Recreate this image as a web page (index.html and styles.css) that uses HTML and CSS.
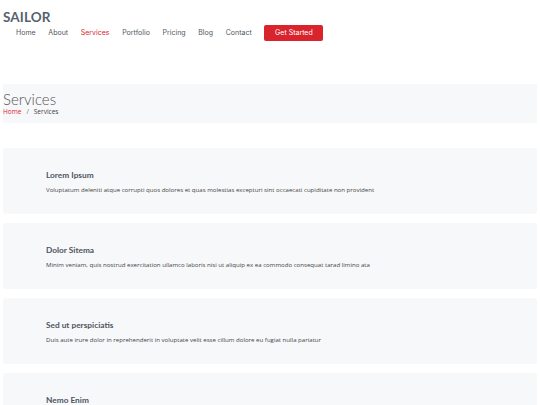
FILE: index.html
```html
<!DOCTYPE html>
<html lang="en">
<head>
<meta charset="utf-8">
<title>Services - Sailor</title>
<link rel="stylesheet" href="styles.css">
</head>
<body>
<header class="header">
  <div class="logo">SAILOR</div>
  <nav class="nav">
    <a href="#">Home</a>
    <a href="#">About</a>
    <a href="#" class="active">Services</a>
    <a href="#">Portfolio</a>
    <a href="#">Pricing</a>
    <a href="#">Blog</a>
    <a href="#">Contact</a>
    <a href="#" class="btn">Get Started</a>
  </nav>
</header>
<section class="breadcrumbs">
  <h2>Services</h2>
  <ol>
    <li><a href="#">Home</a></li>
    <li class="sep">/</li>
    <li>Services</li>
  </ol>
</section>
<main class="services">
  <div class="card">
    <h4>Lorem Ipsum</h4>
    <p>Voluptatum deleniti atque corrupti quos dolores et quas molestias excepturi sint occaecati cupiditate non provident</p>
  </div>
  <div class="card">
    <h4>Dolor Sitema</h4>
    <p>Minim veniam, quis nostrud exercitation ullamco laboris nisi ut aliquip ex ea commodo consequat tarad limino ata</p>
  </div>
  <div class="card">
    <h4>Sed ut perspiciatis</h4>
    <p>Duis aute irure dolor in reprehenderit in voluptate velit esse cillum dolore eu fugiat nulla pariatur</p>
  </div>
  <div class="card">
    <h4>Nemo Enim</h4>
    <p>At vero eos et accusamus et iusto odio dignissimos ducimus qui blanditiis praesentium voluptatum deleniti atque</p>
  </div>
</main>
</body>
</html>
```
FILE: styles.css
```css
* { box-sizing: border-box; }
html, body { margin: 0; padding: 0; }
body {
  background: #fff;
  font-family: "Open Sans", "Liberation Sans", sans-serif;
  color: #444;
  padding: 0 3px;
}
a { text-decoration: none; color: inherit; }

.header {
  padding-top: 9px;
  height: 84px;
}
.logo {
  font-family: "Lato", "Open Sans", sans-serif;
  font-weight: 700;
  font-size: 13.5px;
  line-height: 16px;
  color: #556270;
  letter-spacing: 0.1px;
}
.nav {
  display: flex;
  align-items: center;
  gap: 12.7px;
  margin-top: -1px;
  padding-left: 13px;
  font-family: "Inter", "Roboto", sans-serif;
  font-size: 7px;
  color: #505760;
  height: 17px;
}
.nav a.active { color: #d9232d; }
.nav a.btn {
  background: #d9232d;
  color: #fff;
  border-radius: 2px;
  width: 59px;
  height: 16px;
  display: flex;
  align-items: center;
  justify-content: center;
}

.breadcrumbs {
  background: #f7f8fa;
  height: 39px;
  padding-top: 6px;
}
.breadcrumbs h2 {
  margin: 0;
  font-family: "Lato", "Open Sans", sans-serif;
  font-weight: 300;
  font-size: 15px;
  line-height: 18px;
  color: #555;
}
.breadcrumbs ol {
  list-style: none;
  margin: -1px 0 0;
  padding: 0;
  display: flex;
  gap: 4px;
  font-size: 6.5px;
  line-height: 9px;
  color: #444;
}
.breadcrumbs ol a { color: #d9232d; }
.breadcrumbs .sep { color: #6c757d; padding: 0 1px; }

.services {
  margin-top: 25px;
  display: flex;
  flex-direction: column;
  gap: 9px;
}
.card {
  background: #f7f8fa;
  border-radius: 3px;
  height: 66px;
  padding: 22px 43px 0;
}
.card h4 {
  margin: 0;
  font-family: "Lato", "Open Sans", sans-serif;
  font-weight: 700;
  font-size: 8.3px;
  line-height: 10px;
  color: #4e5560;
}
.card p {
  margin: 6px 0 0;
  font-size: 6.1px;
  line-height: 8px;
  color: #444;
}
```
